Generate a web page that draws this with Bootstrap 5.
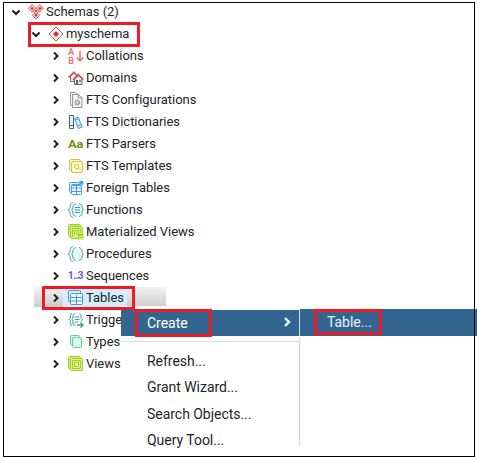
<!DOCTYPE html>
<html lang="en">
<head>
<meta charset="utf-8">
<title>Object browser</title>
<link href="https://cdn.jsdelivr.net/npm/bootstrap@5.3.0/dist/css/bootstrap.min.css" rel="stylesheet">
<style>
body{width:477px;height:457px;overflow:hidden;background:#fff;font-family:Roboto,sans-serif;font-size:13px;line-height:22px;color:#212529}
.frame{margin:2px 2px 0 3px;height:455px;border:1px solid #000}
.tree{margin-top:-2px;letter-spacing:-.04px}
.node{height:22px;white-space:nowrap}
.d1{padding-left:8px}.d2{padding-left:28px}.d3{padding-left:48px}
.node>svg{width:16px;height:16px;flex:none}
.node>.chev{width:8px;height:8px;margin-right:8px}
.node>.ico{margin-right:2px}
.chev,.arrow{fill:none;stroke:#1c2024;stroke-width:2}
.ico{fill:none;stroke-width:1}
.ico text{stroke:none;font-family:Roboto,sans-serif;font-weight:700;letter-spacing:0}
.cut{width:35px;overflow:hidden}
.selected{position:relative}
.selected::before{content:"";position:absolute;left:30px;top:0;width:132px;height:20px;background:linear-gradient(#f3f3f3,#cbcbcb)}
.selected::after{content:"";position:absolute;left:59px;top:1px;width:64px;height:19px;background:#d5edfc}
.selected>*{position:relative;z-index:1}
.menu{left:121px;top:306px;width:179px;height:147px;background:#fff;z-index:2;font-size:14px;line-height:26px;padding-top:4px;letter-spacing:-.03px}
.menu::after{content:"";position:absolute;right:0;top:31px;bottom:7px;width:1px;background:#d6dae2;box-shadow:1px 1px 1px #f0f1f5}
.entry{height:26.3px;padding-left:26px;white-space:nowrap}
.active-entry{height:26px;background:#326690;color:#fff}
.rule{height:1px;background:#dadde2;margin:5px 0 6px}
.arrow{stroke:#fff;stroke-width:2.400;width:8px;height:10px;margin-right:9px;margin-top:-2px}
.submenu{left:299px;top:309px;width:178px;height:27px;background:#326690;color:#e9eff5;z-index:3;font-size:14px;line-height:26px;padding-left:27px;border-left:1px solid #d5dce5;letter-spacing:-.04px}
.edge{left:474px;top:309px;width:1px;height:27px;background:#000;z-index:4}
.mark-box{position:absolute;border:3px solid #ed1c24;z-index:5}
.m1{left:28px;top:22px;width:112px;height:25px}
.m2{left:42px;top:286px;width:93px;height:24px}
.m3{left:135px;top:309px;width:77px;height:28px}
.m4{left:314px;top:309px;width:68px;height:26px}
</style>
<script src="https://cdn.jsdelivr.net/npm/bootstrap@5.3.0/dist/js/bootstrap.bundle.min.js"></script>
</head>
<body class="position-relative">
<svg class="d-none">
<symbol id="right" viewBox="0 0 8 8"><path d="M2 .5 5.500 4 2 7.500"/></symbol>
<symbol id="down" viewBox="0 0 8 8"><path d="M.5 2.500 4 6 7.500 2.500"/></symbol>
<symbol id="braces" viewBox="0 0 16 16"><path d="M5 .8C2 .8 2.300 3.500 2 5.500 1.800 7 1.300 7.800.3 8c1 .2 1.500 1 1.700 2.500.3 2 0 4.700 3 4.700"/><path fill="#e2f8f8" stroke="none" d="M9.500 2C5 3 5 6 5 8s0 5 4.500 6c4.500-1 4.500-4 4.500-6s0-5-4.500-6z"/><path d="M8 1.500C5.500 2 4.800 4 4.800 6c0 1-.4 1.700-1.300 2 .9.300 1.300 1 1.300 2 0 2 .7 4 3.200 4.500M11 1.500c2.500.5 3.200 2.500 3.200 4.500 0 1 .4 1.700 1.300 2-.9.300-1.300 1-1.300 2 0 2-.7 4-3.200 4.500"/></symbol>
</svg>
<main class="frame">
<div class="tree">
<div class="node d1 d-flex align-items-center"><svg class="chev"><use href="#down"/></svg><svg class="ico" viewBox="0 0 16 16" stroke="#d86666"><g fill="#f6d5d5"><path d="m4.200.7 3.700 3.700-3.700 3.700L.5 4.400zM11.800.7l3.700 3.700-3.700 3.700-3.700-3.700zM8 7.600l3.700 3.700L8 15l-3.700-3.700z"/><path d="m8 3.700 3.300 3.300L8 10.300 4.700 7z"/></g><path fill="#c33" stroke="none" d="m4 2.800 1.600 1.600L4 6 2.400 4.400zM12 2.800l1.600 1.600L12 6l-1.600-1.600zM8 9.800l1.600 1.600L8 13l-1.600-1.600zM8 5.400 9.600 7 8 8.600 6.400 7z"/></svg><span>Schemas (2)</span></div>
<div class="node d2 d-flex align-items-center"><svg class="chev"><use href="#down"/></svg><svg class="ico" viewBox="0 0 16 16"><path stroke="#d75a5a" fill="#fdf0f0" d="m8 1 7 7-7 7-7-7z"/><path fill="#c93434" d="m8 5 3 3-3 3-3-3z"/></svg><span>myschema</span></div>
<div class="node d3 d-flex align-items-center"><svg class="chev"><use href="#right"/></svg><svg class="ico overflow-visible" viewBox="0 0 16 16"><g fill="#ed7474"><text x="0" y="6.500" style="font-size:9px">A</text><text x=".3" y="15.500" style="font-size:9px">B</text></g><path stroke="#e66" stroke-width="1.400" d="M12 2.500v10M8.700 9.500l3.300 3.300 3.300-3.300"/></svg><span>Collations</span></div>
<div class="node d3 d-flex align-items-center"><svg class="chev"><use href="#right"/></svg><svg class="ico" viewBox="0 0 16 16"><path fill="#eee" stroke="#777" d="M2.500 6.500v5h7v-5L6 3z"/><path stroke="#d54b50" stroke-width="1.500" d="m.5 7.500 5.300-5.300 5 5"/><path fill="#e9e9e9" stroke="#666" d="M6.500 9v5.500h7.500V9l-3.700-3.500z"/><path stroke="#d54b50" stroke-width="1.500" d="m5 9.700 5.300-5.200 5.200 5.200"/><path fill="#446f96" d="M8 10h2v4.500H8z"/><path fill="#c94a4a" d="M11.200 10h1.600v2h-1.600z"/></svg><span>Domains</span></div>
<div class="node d3 d-flex align-items-center"><svg class="chev"><use href="#right"/></svg><svg class="ico" viewBox="0 0 16 16" stroke="#999"><path fill="#f4f4f4" d="M4.500 13.500h-2v-13h5L9 2"/><path fill="#f4f4f4" d="M4.500 2.500h6l3.500 3.500v9.500H4.500zM10.500 2.500V6H14"/><circle cx="9.300" cy="10.500" r="2.300" stroke-width="1.300" stroke-dasharray="1.400 .5"/><circle cx="9.300" cy="10.500" r="1.600"/></svg><span>FTS Configurations</span></div>
<div class="node d3 d-flex align-items-center"><svg class="chev"><use href="#right"/></svg><svg class="ico" viewBox="0 0 16 16" stroke="#346b91"><path fill="#e8f4fb" d="M1.500 1.500h4v13h-4zM1.500 11.500h4"/><path fill="#d3edfc" stroke="#4c9bc6" d="m6.500 4.500 3.700-1.300 4 9.800-3.700 1.500zM9.500 12l3.700-1.500M7.200 6l3.500-1.300"/></svg><span>FTS Dictionaries</span></div>
<div class="node d3 d-flex align-items-center"><svg class="chev"><use href="#right"/></svg><svg class="ico overflow-visible" viewBox="0 0 16 16"><text x="0" y="12" fill="#619600" textLength="15.500" lengthAdjust="spacingAndGlyphs" style="font-size:11.500px">Aa</text></svg><span>FTS Parsers</span></div>
<div class="node d3 d-flex align-items-center"><svg class="chev"><use href="#right"/></svg><svg class="ico" viewBox="0 0 16 16" stroke="#d6c04f"><rect x="1.500" y="1.500" width="11" height="11" rx="1.500" fill="#fff8c4"/><rect x="3.500" y="3.500" width="11" height="11" rx="1.500" fill="#fff8c4"/><circle cx="8.700" cy="8.500" r="2.200"/><path d="m10.500 10.300 2 2"/></svg><span>FTS Templates</span></div>
<div class="node d3 d-flex align-items-center"><svg class="chev"><use href="#right"/></svg><svg class="ico" viewBox="0 0 16 16" stroke="#4a9fe0"><rect x="1.500" y="2.500" width="10" height="10" rx="1" fill="#d8efff"/><rect x="3.500" y="4.500" width="10" height="10" rx="1" fill="#f2faff"/><path d="M3.500 5.500h10m-10 2.500h10m-10 3.500h10m-5-7v10"/><path stroke-width="1.500" d="m11 5 3.500-3.500M11.500 1.800h3v3"/></svg><span>Foreign Tables</span></div>
<div class="node d3 d-flex align-items-center"><svg class="chev"><use href="#right"/></svg><svg class="ico" viewBox="0 0 16 16" stroke="#3c99a5"><use href="#braces"/><path d="M7 5.500h5m-5 2.500h5m-5 2.500h5"/></svg><span>Functions</span></div>
<div class="node d3 d-flex align-items-center"><svg class="chev"><use href="#right"/></svg><svg class="ico" viewBox="0 0 16 16" stroke="#9fd022"><rect x=".5" y=".5" width="12" height="12" rx="1" fill="#cfea76"/><rect x="2.500" y="2.500" width="12" height="12" rx="1" fill="#d7ef83"/><path d="M4.500 13V4.500h8v5M6.500 11V6.500h4v3.500h-2v-1.500"/><path fill="#a4d52d" stroke="none" d="M10 10h5.500v5.500H10z"/><path stroke="#eefabf" d="M11 12.500h3.500m-3.500 2h3.500"/></svg><span>Materialized Views</span></div>
<div class="node d3 d-flex align-items-center"><svg class="chev"><use href="#right"/></svg><svg class="ico" viewBox="0 0 16 16" stroke="#3c99a5"><use href="#braces"/></svg><span>Procedures</span></div>
<div class="node d3 d-flex align-items-center"><svg class="chev"><use href="#right"/></svg><svg class="ico overflow-visible" viewBox="0 0 16 16"><text x="0" y="11" fill="#7f4fc0" textLength="15.500" style="font-size:10px">1..3</text></svg><span>Sequences</span></div>
<div class="node d3 d-flex align-items-center selected"><svg class="chev"><use href="#right"/></svg><svg class="ico" viewBox="0 0 16 16" stroke="#4197dc"><rect x=".5" y=".5" width="12" height="11" rx="1" fill="#d8efff"/><rect x="2.500" y="3.500" width="12" height="11" rx="1" fill="#f5fbff"/><path d="M2.500 7.500h12m-12 3.500h12M8.500 5v9.500"/></svg><span>Tables</span></div>
<div class="node d3 d-flex align-items-center"><svg class="chev"><use href="#right"/></svg><svg class="ico" viewBox="0 0 16 16" stroke="#3a9d9d"><path d="M4 1.500C2 1.500 2.500 3 2.500 5S2 7 .8 7.500c1.200.5 1.700 1 1.700 3s-.5 3 1.500 3"/><path fill="#e2f8f5" d="M7 1.500C4.500 2.500 5 4 5 5S4.500 7 3.800 7.500C4.500 8 5 8.500 5 10s-.5 2.500 2 3.500M11.500 1.500c2 1 1.500 2.500 1.500 3.500s.5 2 1.700 2.500c-.8.400-1.500.8-1.700 2M7 5h4.500M7 7.500h4.500M7 10h3"/><path stroke-width="1.500" d="M9 13h6m-2.500-2.500L15 13l-2.500 2.500"/></svg><span class="cut">Trigge</span></div>
<div class="node d3 d-flex align-items-center"><svg class="chev"><use href="#right"/></svg><svg class="ico" viewBox="0 0 16 16" stroke="#68cba0"><rect x="2.500" y="1.500" width="9" height="10" rx="1" fill="#d5faea"/><rect x="4.500" y="3.500" width="9" height="10" rx="1" fill="#d9fced"/></svg><span>Types</span></div>
<div class="node d3 d-flex align-items-center"><svg class="chev"><use href="#right"/></svg><svg class="ico" viewBox="0 0 16 16" stroke="#a3cc2c"><rect x=".5" y=".5" width="12" height="12" rx="1" fill="#cfea76"/><rect x="2.500" y="2.500" width="12" height="12" rx="1" fill="#dcf38d"/><path d="M4.500 4.500h8v8h-8zM6.500 6.500h4v4h-4z"/></svg><span>Views</span></div>
</div>
</main>
<div class="menu position-absolute">
<div class="entry active-entry d-flex align-items-center justify-content-between"><span>Create</span><svg class="arrow" viewBox="0 0 8 10"><path d="M2 1l4 4-4 4"/></svg></div>
<div class="rule"></div>
<div class="entry">Refresh...</div>
<div class="entry">Grant Wizard...</div>
<div class="entry">Search Objects...</div>
<div class="entry">Query Tool...</div>
</div>
<div class="submenu position-absolute">Table...</div>
<div class="edge position-absolute"></div>
<div class="mark-box m1"></div><div class="mark-box m2"></div><div class="mark-box m3"></div><div class="mark-box m4"></div>
</body>
</html>
